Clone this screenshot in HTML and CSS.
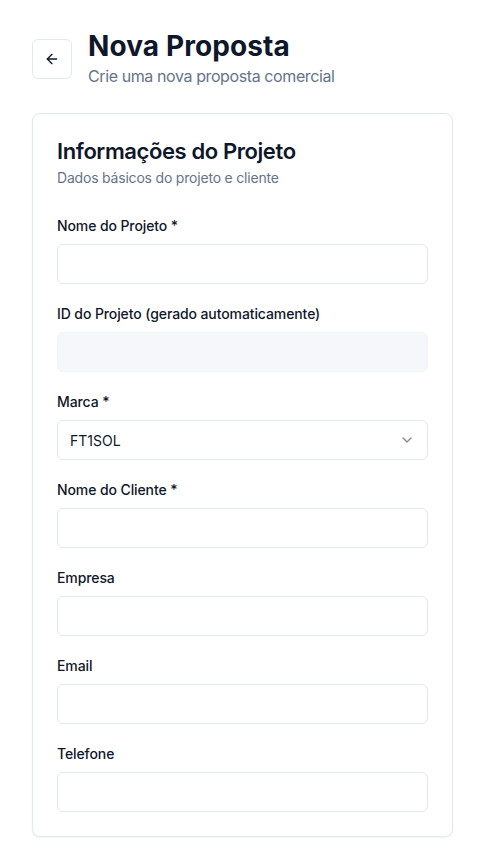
FILE: index.html
```html
<!DOCTYPE html>
<html lang="pt-BR">
<head>
<meta charset="utf-8">
<title>Nova Proposta</title>
<link rel="stylesheet" href="styles.css">
</head>
<body>
<div class="page">
  <header class="page-header">
    <button class="back-btn" type="button" aria-label="Voltar">
      <svg width="16" height="16" viewBox="0 0 24 24" fill="none" stroke="currentColor" stroke-width="2" stroke-linecap="round" stroke-linejoin="round"><path d="m12 19-7-7 7-7"/><path d="M19 12H5"/></svg>
    </button>
    <div class="heading">
      <h1 class="title">Nova Proposta</h1>
      <p class="subtitle">Crie uma nova proposta comercial</p>
    </div>
  </header>

  <section class="card">
    <div class="card-header">
      <h2 class="card-title">Informações do Projeto</h2>
      <p class="card-desc">Dados básicos do projeto e cliente</p>
    </div>
    <div class="card-content">
      <div class="field">
        <label class="label">Nome do Projeto *</label>
        <div class="input"></div>
      </div>
      <div class="field">
        <label class="label">ID do Projeto (gerado automaticamente)</label>
        <div class="input disabled"></div>
      </div>
      <div class="field">
        <label class="label">Marca *</label>
        <div class="input select">
          <span>FT1SOL</span>
          <svg class="chev" width="16" height="16" viewBox="0 0 24 24" fill="none" stroke="currentColor" stroke-width="2" stroke-linecap="round" stroke-linejoin="round"><path d="m6 9 6 6 6-6"/></svg>
        </div>
      </div>
      <div class="field">
        <label class="label">Nome do Cliente *</label>
        <div class="input"></div>
      </div>
      <div class="field">
        <label class="label">Empresa</label>
        <div class="input"></div>
      </div>
      <div class="field">
        <label class="label">Email</label>
        <div class="input"></div>
      </div>
      <div class="field">
        <label class="label">Telefone</label>
        <div class="input"></div>
      </div>
    </div>
  </section>
</div>
</body>
</html>
```

FILE: styles.css
```css
* { box-sizing: border-box; }
html, body { margin: 0; padding: 0; background: #ffffff; }
body {
  font-family: Inter, "Noto Sans", sans-serif;
  color: #0f172a;
}
.page {
  padding: 30px 31px 24px 32px;
  display: flex;
  flex-direction: column;
  gap: 25px;
}
.page-header {
  display: flex;
  align-items: center;
  gap: 16px;
}
.back-btn {
  width: 40px;
  height: 40px;
  flex: none;
  border: 1px solid #e2e8f0;
  border-radius: 6px;
  background: #fff;
  color: #0f172a;
  display: flex;
  align-items: center;
  justify-content: center;
  padding: 0;
}
.heading { display: flex; flex-direction: column; }
.title {
  margin: 0;
  font-size: 28px;
  line-height: 32px;
  font-weight: 700;
  letter-spacing: 0.1px;
  color: #0f172a;
}
.subtitle {
  margin: 2px 0 0 0;
  font-size: 16px;
  line-height: 24px;
  letter-spacing: -0.4px;
  color: #64748b;
}
.card {
  border: 1px solid #e2e8f0;
  border-radius: 8px;
  background: #fff;
  box-shadow: 0 1px 2px rgba(0,0,0,0.05);
}
.card-header {
  padding: 25px 24px 0 24px;
  display: flex;
  flex-direction: column;
  gap: 5px;
}
.card-title {
  margin: 0;
  font-size: 22px;
  line-height: 24px;
  font-weight: 600;
  letter-spacing: -0.4px;
}
.card-desc {
  margin: 0;
  font-size: 14px;
  line-height: 20px;
  letter-spacing: -0.2px;
  color: #64748b;
}
.card-content {
  padding: 28px 24px 24px 24px;
  display: flex;
  flex-direction: column;
  gap: 20px;
}
.field {
  display: flex;
  flex-direction: column;
  gap: 8px;
}
.label {
  font-size: 14px;
  line-height: 20px;
  font-weight: 500;
  letter-spacing: -0.1px;
  color: #0f172a;
}
.input {
  height: 40px;
  border: 1px solid #e2e8f0;
  border-radius: 6px;
  background: #fff;
}
.input.disabled {
  background: #f5f7fa;
  border-color: #f1f5f9;
}
.input.select {
  display: flex;
  align-items: center;
  justify-content: space-between;
  padding: 0 12px;
  font-size: 14px;
  color: #0f172a;
}
.chev { color: #0f172a; opacity: 0.5; }
```
